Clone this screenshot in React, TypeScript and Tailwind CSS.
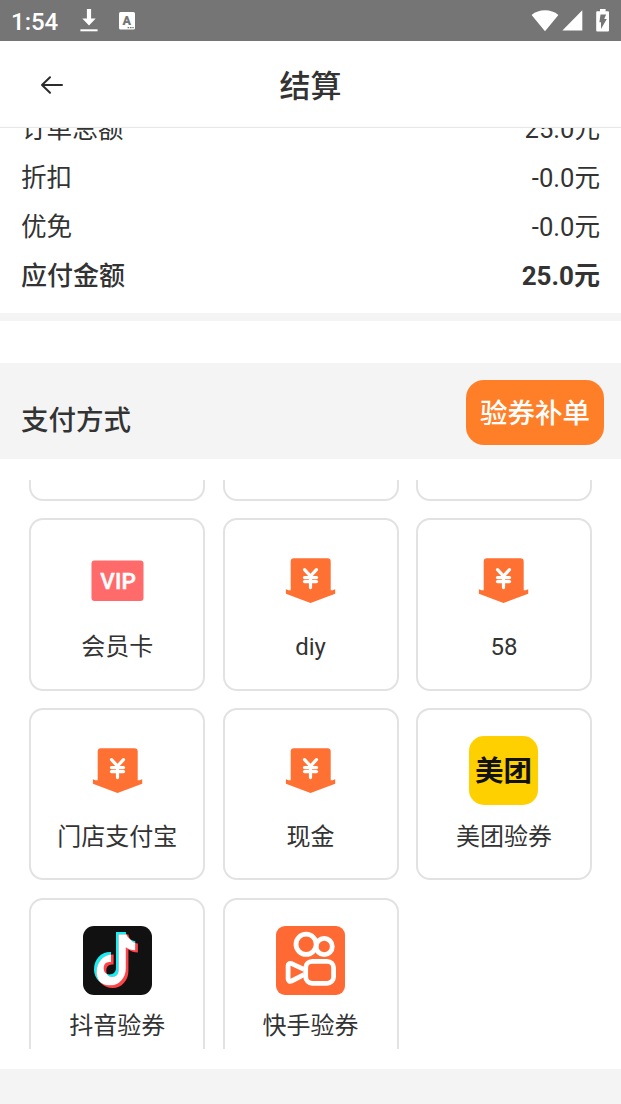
import type { ReactNode } from "react";
import { JapaneseYen } from "lucide-react";

interface AmountRow {
  label: string;
  value: string;
  bold?: boolean;
}

interface PayMethod {
  name: string;
  icon: ReactNode;
}

function DownloadIcon() {
  return (
    <svg width="18" height="24" viewBox="0 0 18 24" fill="#fff">
      <path d="M6.9 0h4.2v9.6h4.6L9 16.4 2.3 9.6h4.6z" />
      <path d="M.4 20.3h17.2v2H.4z" />
    </svg>
  );
}

function KeyboardIcon() {
  return (
    <svg width="16" height="18" viewBox="0 0 16 18">
      <rect width="16" height="17.5" rx="1.6" fill="#fff" />
      <text
        x="7.8"
        y="13.2"
        textAnchor="middle"
        fontFamily="Roboto, sans-serif"
        fontWeight="900"
        fontSize="12.5"
        fill="#757575"
      >
        A
      </text>
      <path d="M8.6 15h1.6v1.3H8.6zM11 15h1.6v1.3H11zM13.3 15h1.4v1.3h-1.4z" fill="#757575" />
    </svg>
  );
}

function WifiIcon() {
  return (
    <svg width="28" height="22" viewBox="0 0 28 22" fill="#fff">
      <path d="M14 21.2L.6 4.9C4.4 1.7 9 .2 14 .2s9.6 1.5 13.4 4.7z" />
    </svg>
  );
}

function SignalIcon() {
  return (
    <svg width="21" height="21" viewBox="0 0 21 21" fill="#fff">
      <path d="M20.3.3v20.2H.4z" />
    </svg>
  );
}

function BatteryIcon() {
  return (
    <svg width="14" height="23" viewBox="0 0 14 23">
      <path
        d="M4 0h5.6v2.2h2.1c.8 0 1.3.5 1.3 1.3v17.7c0 .8-.5 1.3-1.3 1.3H1.5C.7 22.5.2 22 .2 21.2V3.5c0-.8.5-1.3 1.3-1.3H4z"
        fill="#fff"
      />
      <path d="M4.5 5.6h5.6L8.2 10h2.6L5 20v-6.8H3.4z" fill="#757575" />
    </svg>
  );
}

function BackIcon() {
  return (
    <svg
      width="24"
      height="20"
      viewBox="0 0 24 20"
      fill="none"
      stroke="#2b2b2b"
      strokeWidth="2"
      strokeLinecap="round"
      strokeLinejoin="round"
    >
      <path d="M22 10H2M10 2.3L2 10l8 7.7" />
    </svg>
  );
}

function VipIcon() {
  return (
    <svg width="69" height="69" viewBox="0.5 0.5 69 69">
      <rect x="9" y="15" width="52" height="40.5" rx="3" fill="#ff6b6b" />
      <text
        x="17.8"
        y="43.2"
        fontFamily="Roboto, sans-serif"
        fontWeight="500"
        fontSize="22.5"
        letterSpacing=".2"
        stroke="#fff"
        strokeWidth=".5"
        strokeLinejoin="round"
        fill="#fff"
      >
        VIP
      </text>
    </svg>
  );
}

function CashIcon() {
  return (
    <svg width="69" height="69" viewBox="0.5 0.5 69 69">
      <path
        d="M18.4 12.8h33.5a3.3 3.3 0 0 1 3.3 3.3v28.7h2l2.5-1v4.4L35 57.4 10.4 48.2v-4.4l2.5 1h2.3V16.1a3.3 3.3 0 0 1 3.2-3.3z"
        fill="#ff7033"
      />
      <JapaneseYen x="23" y="21.1" size={24} color="#fff" strokeWidth={3.2} />
    </svg>
  );
}

function MeituanIcon() {
  return (
    <svg width="69" height="69" viewBox="0.5 0.5 69 69">
      <rect x=".5" y=".5" width="69" height="69" rx="15" fill="#ffd000" />
      <text
        x="35"
        y="45.6"
        textAnchor="middle"
        fontFamily="'Noto Sans CJK SC', sans-serif"
        fontWeight="700"
        fontSize="28.5"
        fill="#111"
      >
        美团
      </text>
    </svg>
  );
}

const NOTE =
  "M33.5 6.5h9.8c.6 4.5 4 8.500 9.500 9.200v9c-3.800 0-7-1-9.500-3v21.300c0 9.500-6.800 17-15.800 17S11.500 53 11.500 44c0-10.500 7.500-18 17-17.500v10.200c-5-.8-7.300 2.200-7.300 6.100 0 3.800 2.300 6.200 5.700 6.200 4 0 6.600-2.400 6.600-6.700z";

function DouyinIcon() {
  return (
    <svg width="69" height="69" viewBox="0.5 0.5 69 69">
      <clipPath id="note">
        <path d={NOTE} />
      </clipPath>
      <rect x=".5" y=".5" width="69" height="69" rx="11" fill="#111" />
      <path d={NOTE} fill="#16f0f5" />
      <path d={NOTE} fill="#ff4448" transform="translate(2.6 2.4)" />
      <g clipPath="url(#note)">
        <path d={NOTE} fill="#fff" transform="translate(2.6 2.4)" />
      </g>
    </svg>
  );
}

function KuaishouIcon() {
  return (
    <svg width="69" height="69" viewBox="0.5 0.5 69 69" fill="none" stroke="#fff">
      <rect x=".5" y=".5" width="69" height="69" rx="9" fill="#ff6933" stroke="none" />
      <circle cx="30.6" cy="18.8" r="10.1" strokeWidth="4.8" />
      <circle cx="48.7" cy="21" r="8.1" strokeWidth="4.8" />
      <rect x="30.2" y="35.8" width="27.9" height="22" rx="6.5" strokeWidth="4.8" />
      <path
        d="M28.5 43.9l-12.4-5.8c-2-.8-3.5 0-3.5 1.9v13.6c0 1.9 1.5 2.7 3.5 1.9l12.4-6.3"
        strokeWidth="4.8"
        strokeLinejoin="round"
      />
    </svg>
  );
}

const amounts: AmountRow[] = [
  { label: "订单总额", value: "25.0元" },
  { label: "折扣", value: "-0.0元" },
  { label: "优免", value: "-0.0元" },
  { label: "应付金额", value: "25.0元", bold: true },
];

const methods: PayMethod[] = [
  { name: "", icon: null },
  { name: "", icon: null },
  { name: "", icon: null },
  { name: "会员卡", icon: <VipIcon /> },
  { name: "diy", icon: <CashIcon /> },
  { name: "58", icon: <CashIcon /> },
  { name: "门店支付宝", icon: <CashIcon /> },
  { name: "现金", icon: <CashIcon /> },
  { name: "美团验券", icon: <MeituanIcon /> },
  { name: "抖音验券", icon: <DouyinIcon /> },
  { name: "快手验券", icon: <KuaishouIcon /> },
];

function StatusBar() {
  return (
    <div className="flex h-[41px] shrink-0 items-center justify-between bg-[#757575] px-[11px] text-white">
      <div className="flex items-center">
        <span className="w-[69px] pt-[2px] text-[24px] leading-none font-medium">1:54</span>
        <DownloadIcon />
        <span className="ml-[21px]">
          <KeyboardIcon />
        </span>
      </div>
      <div className="flex items-center">
        <WifiIcon />
        <span className="ml-[3px]">
          <SignalIcon />
        </span>
        <span className="ml-[13px]">
          <BatteryIcon />
        </span>
      </div>
    </div>
  );
}

export default function App() {
  return (
    <div className="flex h-[1104px] w-[621px] flex-col overflow-hidden bg-white font-[Roboto,'Noto_Sans_CJK_SC',sans-serif] text-[#333]">
      <StatusBar />

      <header className="grid h-[87px] shrink-0 grid-cols-3 items-center">
        <button className="pl-[40px]">
          <BackIcon />
        </button>
        <h1 className="pt-[3px] text-center text-[31px] leading-none font-medium">结算</h1>
      </header>

      <section className="flex h-[185px] shrink-0 flex-col justify-end overflow-hidden px-[21px] pb-[12px] shadow-[0_-1px_1px_#e8e8e8]">
        {amounts.map((row) => (
          <div
            key={row.label}
            className={`flex h-[49px] shrink-0 items-center justify-between ${
              row.bold ? "text-[26px] font-bold" : "text-[25.6px]"
            }`}
          >
            <span className={row.bold ? "font-medium" : ""}>{row.label}</span>
            <span>{row.value}</span>
          </div>
        ))}
      </section>

      <div className="h-[8px] shrink-0 bg-[#f4f4f4]" />

      <section className="mt-[42px] flex h-[96px] shrink-0 items-center justify-between bg-[#f4f4f4] pl-[21px] pr-[17px]">
        <h2 className="mt-[20px] text-[27.5px] font-medium">支付方式</h2>
        <button className="mt-[2px] h-[65px] w-[138px] rounded-[18px] bg-[#ff7f29] pt-[4px] text-[27.5px] font-medium text-white">
          验券补单
        </button>
      </section>

      <section className="mt-[21px] h-[569px] shrink-0 overflow-hidden pl-[29.4px]">
        <div className="-mt-[151.6px] grid grid-cols-[repeat(3,175.9px)] gap-x-[17.4px] gap-y-[17.4px]">
          {methods.map((m, i) => (
            <div
              key={i}
              className="flex h-[172.4px] flex-col items-center rounded-[14px] border-2 border-[#e2e2e2] pt-[26px]"
            >
              {m.icon}
              <span className="mt-[13.6px] text-[24px] leading-[36px]">{m.name}</span>
            </div>
          ))}
        </div>
      </section>

      <footer className="mt-[20px] flex-1 bg-[#f4f4f4]" />
    </div>
  );
}
